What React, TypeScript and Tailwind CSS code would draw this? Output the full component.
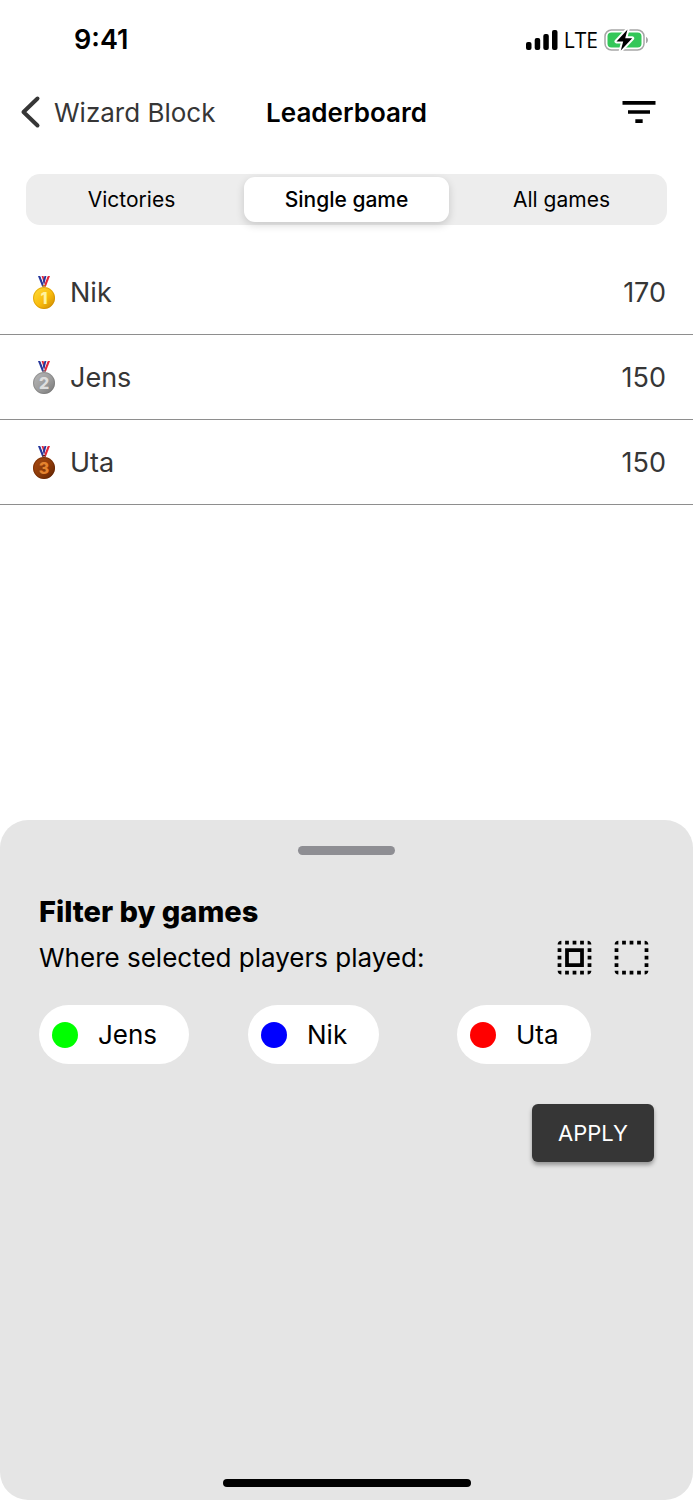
import { useState } from 'react'

type Player = {
  name: string
  score: number
  dot: string
}

const players: Player[] = [
  { name: 'Nik', score: 170, dot: 'bg-[#0000ff]' },
  { name: 'Jens', score: 150, dot: 'bg-[#00ff00]' },
  { name: 'Uta', score: 150, dot: 'bg-[#ff0000]' },
]

const tabs = ['Victories', 'Single game', 'All games']

const medals = [
  { light: '#ffdf3a', mid: '#f9bb0c', dark: '#c98600', num: '#fff3a0' },
  { light: '#b9b9b9', mid: '#9c9c9c', dark: '#757575', num: '#dedede' },
  { light: '#a94a12', mid: '#8c3a08', dark: '#5e2203', num: '#e5842f' },
]

function Medal({ place }: { place: number }) {
  const c = medals[place - 1]
  return (
    <svg viewBox="0 0 24 36" className="w-6 h-9 shrink-0" aria-label={`Place ${place}`}>
      <defs>
        <linearGradient id={`medal-${place}`} x1="0" y1="0" x2="1" y2="1">
          <stop offset="0" stopColor={c.light} />
          <stop offset="0.55" stopColor={c.mid} />
          <stop offset="1" stopColor={c.dark} />
        </linearGradient>
      </defs>
      <path d="M6 0h2.4l4.2 10.5h-2.5z" fill="#26379b" />
      <path d="M18 0h-2.4l-4.2 10.5h2.5z" fill="#e3263a" />
      <path d="M8.4 0h1.200l3 8.500-.6 1z" fill="#f4f4f8" />
      <path d="M15.6 0h-1.200l-3 8.500.6 1z" fill="#f4f4f8" />
      <path d="M9.6 0h1.900l1.600 5.500-.9 2.500z" fill="#e3263a" />
      <path d="M14.4 0h-1.900L10.900 5l1.100 4z" fill="#26379b" />
      <circle cx="12" cy="10.500" r="1.2" fill="none" stroke={c.dark} />
      <circle cx="12" cy="22" r="11" fill={`url(#medal-${place})`} />
      <circle cx="12" cy="22" r="10.5" fill="none" stroke={c.dark} strokeOpacity="0.5" />
      <text x="12" y="28" textAnchor="middle" fontSize="16" fontWeight="800" fill={c.num}>
        {place}
      </text>
    </svg>
  )
}

function StatusBar() {
  return (
    <div className="flex items-center justify-between h-20 pl-[74px] pr-11">
      <span className="text-[27px] font-semibold">9:41</span>
      <div className="flex items-center">
        <svg viewBox="0 0 32 20" className="w-8 h-5" aria-hidden="true">
          <rect x="0" y="12" width="5.5" height="8" rx="2" />
          <rect x="8.7" y="8" width="5.5" height="12" rx="2" />
          <rect x="17.3" y="4" width="5.5" height="16" rx="2" />
          <rect x="26" y="0" width="5.5" height="20" rx="2" />
        </svg>
        <span className="mx-[6px] font-['Open_Sans',sans-serif] text-[21px] leading-6 font-medium">LTE</span>
        <svg viewBox="0 0 45 24" className="w-[45px] h-6" aria-hidden="true">
          <rect x="1" y="2" width="39" height="20" rx="6.5" fill="#fff" stroke="#a6a6a6" strokeWidth="1.5" />
          <rect x="3.5" y="4.5" width="34" height="15" rx="4" fill="#34c759" />
          <path d="M42 9c2.6.8 2.6 5.4 0 6.2z" fill="#a6a6a6" />
          <path
            d="M23.5 1.5 12.5 13.4h6.7L16.8 22.5 28.2 10.3h-7z"
            fill="#000"
            stroke="#fff"
            strokeWidth="4"
            strokeLinejoin="round"
            paintOrder="stroke"
          />
        </svg>
      </div>
    </div>
  )
}

function Header() {
  return (
    <header className="grid grid-cols-[1fr_auto_1fr] items-center h-16 px-8">
      <button className="-ml-3 flex items-center text-[26px] text-[#363636] whitespace-nowrap">
        <svg viewBox="0 0 22 34" className="w-[22px] h-[34px] mr-3" aria-hidden="true">
          <path
            d="M17.5 3.5 3.5 17l14 13.5"
            fill="none"
            stroke="#363636"
            strokeWidth="4"
            strokeLinecap="round"
            strokeLinejoin="round"
          />
        </svg>
        Wizard Block
      </button>
      <h1 className="text-[26px] font-semibold">Leaderboard</h1>
      <button className="justify-self-end" aria-label="Filter">
        <svg viewBox="0 0 24 24" className="size-11" aria-hidden="true">
          <path d="M10 18h4v-2h-4v2zM3 6v2h18V6H3zm3 7h12v-2H6v2z" />
        </svg>
      </button>
    </header>
  )
}

const dashedSquare =
  'M3 5h2V3c-1.1 0-2 .9-2 2zm0 8h2v-2H3v2zm4 8h2v-2H7v2zM3 9h2V7H3v2zm10-6h-2v2h2V3zm6 0v2h2c0-1.1-.9-2-2-2zM5 21v-2H3c0 1.1.9 2 2 2zm-2-4h2v-2H3v2zM9 3H7v2h2V3zm2 18h2v-2h-2v2zm8-8h2v-2h-2v2zm0 8c1.1 0 2-.9 2-2h-2v2zm0-12h2V7h-2v2zm0 8h2v-2h-2v2zm-4 4h2v-2h-2v2zm0-16h2V3h-2v2z'

function FilterSheet() {
  const [selected, setSelected] = useState<string[]>([])
  const byName = [...players].sort((a, b) => a.name.localeCompare(b.name))

  const toggle = (name: string) =>
    setSelected((s) => (s.includes(name) ? s.filter((n) => n !== name) : [...s, name]))

  return (
    <section className="mt-auto min-h-[680px] flex flex-col rounded-[28px] bg-[#e5e5e5] px-[39px] pt-[26px] pb-[13px]">
      <div className="self-center w-[97px] h-[9px] rounded-full bg-[#8e8e93]" />
      <h2 className="mt-[39px] text-[29px] leading-9 font-extrabold">Filter by games</h2>
      <div className="mt-[5px] flex items-center justify-between">
        <p className="text-[26px]">Where selected players played:</p>
        <div className="flex gap-3">
          <button aria-label="Select all" onClick={() => setSelected(players.map((p) => p.name))}>
            <svg viewBox="0 0 24 24" className="size-[45px]" aria-hidden="true">
              <path d={dashedSquare + 'M7 17h10V7H7v10zm2-8h6v6H9V9z'} />
            </svg>
          </button>
          <button aria-label="Deselect all" onClick={() => setSelected([])}>
            <svg viewBox="0 0 24 24" className="size-[45px]" aria-hidden="true">
              <path d={dashedSquare} />
            </svg>
          </button>
        </div>
      </div>
      <div className="mt-[25px] grid grid-cols-3 gap-3 justify-items-start">
        {byName.map((p) => (
          <button
            key={p.name}
            aria-pressed={selected.includes(p.name)}
            onClick={() => toggle(p.name)}
            className="flex items-center gap-5 h-[59px] pl-[13px] pr-8 rounded-full bg-white text-[26px] aria-pressed:bg-gray-300"
          >
            <span className={`size-[26px] rounded-full ${p.dot}`} />
            {p.name}
          </button>
        ))}
      </div>
      <button className="self-end mt-10 h-[58px] px-[26px] rounded-md bg-[#363636] text-[22px] text-white shadow-[0_3px_4px_rgba(0,0,0,0.35)]">
        APPLY
      </button>
      <div className="self-center mt-auto w-[248px] h-2 rounded-full bg-black" />
    </section>
  )
}

export default function App() {
  const [tab, setTab] = useState('Single game')

  return (
    <div className="min-h-screen flex flex-col bg-white text-black font-['Inter',sans-serif]">
      <StatusBar />
      <Header />
      <div className="mt-[30px] mx-[26px] grid grid-cols-3 gap-[10px] p-[3px] rounded-[14px] bg-[#ededed]">
        {tabs.map((t) => (
          <button
            key={t}
            onClick={() => setTab(t)}
            className={
              t === tab
                ? 'h-[45px] rounded-[11px] bg-white text-[21px] font-medium shadow-[0_3px_8px_rgba(0,0,0,0.16)]'
                : 'h-[45px] rounded-[11px] text-[21px]'
            }
          >
            {t}
          </button>
        ))}
      </div>
      <ol className="mt-[25px] text-[27px] text-[#363636]">
        {players.map((p, i) => (
          <li key={p.name} className="flex items-center h-[85px] pt-[3px] pl-8 pr-[27px] border-b border-[#8e8e8e]">
            <Medal place={i + 1} />
            <span className="ml-[14px]">{p.name}</span>
            <span className="ml-auto">{p.score}</span>
          </li>
        ))}
      </ol>
      <FilterSheet />
    </div>
  )
}
